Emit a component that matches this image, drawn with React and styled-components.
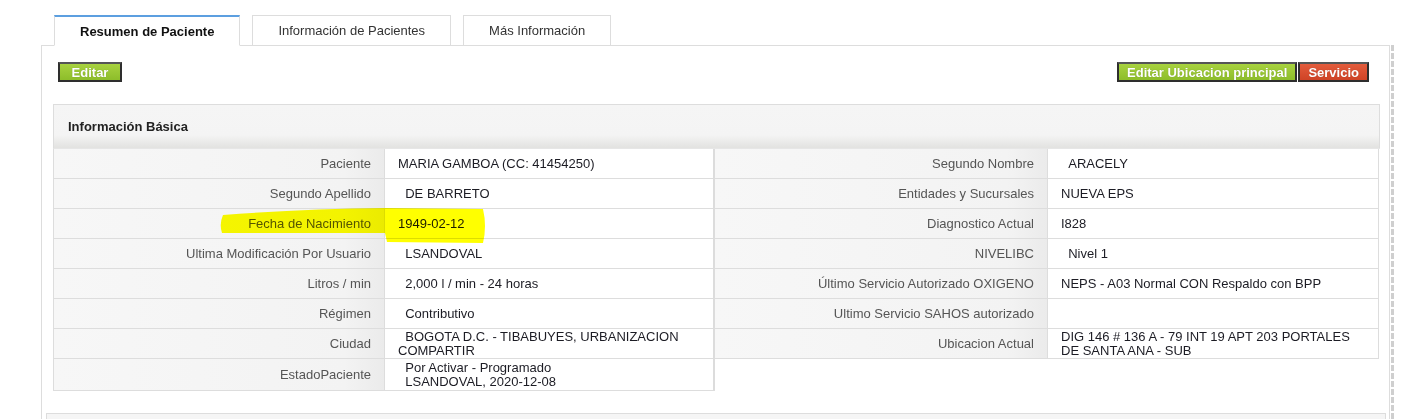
import React from 'react'
import styled, { createGlobalStyle } from 'styled-components'

const GlobalStyle = createGlobalStyle`
	html, body {
		margin: 0;
		padding: 0;
		background: #fff;
		overflow: hidden;
	}
	body {
		font-family: "Liberation Sans", Arial, sans-serif;
		font-size: 13px;
		color: #222;
	}
`

const rows = [
	['Paciente', 'MARIA GAMBOA (CC: 41454250)', 'Segundo Nombre', '  ARACELY'],
	['Segundo Apellido', '  DE BARRETO', 'Entidades y Sucursales', 'NUEVA EPS'],
	['Fecha de Nacimiento', '1949-02-12', 'Diagnostico Actual', 'I828'],
	['Ultima Modificación Por Usuario', '  LSANDOVAL', 'NIVELIBC', '  Nivel 1'],
	['Litros / min', '  2,000 l / min - 24 horas', 'Último Servicio Autorizado OXIGENO', 'NEPS - A03 Normal CON Respaldo con BPP'],
	['Régimen', '  Contributivo', 'Ultimo Servicio SAHOS autorizado', ''],
	['Ciudad', '  BOGOTA D.C. - TIBABUYES, URBANIZACION COMPARTIR', 'Ubicacion Actual', 'DIG 146 # 136 A - 79 INT 19 APT 203 PORTALES DE SANTA ANA - SUB'],
	['EstadoPaciente', '  Por Activar - Programado\n  LSANDOVAL, 2020-12-08'],
]

const Page = styled.div`
	padding: 15px 0 0 41px;
`

const TabBar = styled.div`
	display: flex;
	gap: 12px;
	padding-left: 13px;
	position: relative;
	z-index: 1;
	margin-bottom: -1px;
`

const Tab = styled.div`
	padding: 0 25px;
	display: flex;
	align-items: center;
	background: #fff;
	border: 1px solid #ddd;
	border-top: ${p => (p.$active ? '2px solid #5c9fe0' : '1px solid #ddd')};
	border-bottom: 1px solid ${p => (p.$active ? '#fff' : '#ddd')};
	height: ${p => (p.$active ? '28px' : '29px')};
	font-weight: ${p => (p.$active ? 'bold' : 'normal')};
	color: ${p => (p.$active ? '#111' : '#333')};
`

const BodyRow = styled.div`
	display: flex;
`

const Panel = styled.div`
	width: 1347px;
	height: 420px;
	border: 1px solid #ddd;
	background: #fff;
`

const DashRule = styled.div`
	width: 3px;
	margin-left: 1px;
	height: 420px;
	background: repeating-linear-gradient(to bottom, #cfcfcf 0 6px, transparent 6px 8px);
`

const Toolbar = styled.div`
	display: flex;
	justify-content: space-between;
	padding: 16px 20px 0 16px;
`

const ButtonGroup = styled.div`
	display: flex;
	gap: 1px;
`

const Button = styled.div`
	height: 16px;
	min-width: ${p => p.$wide || 'auto'};
	padding: 0 8px;
	border: 2px solid #2e2e2e;
	border-top-color: #555;
	display: flex;
	align-items: center;
	justify-content: center;
	color: #fff;
	font-weight: bold;
	font-size: 13px;
	text-shadow: 0 0 1px rgba(0, 0, 0, 0.25);
	background: ${p =>
		p.$tone === 'red'
			? 'linear-gradient(to bottom, #e35c3c, #cf4326)'
			: 'linear-gradient(to bottom, #a8d23f, #8dbd2a)'};
`

const InfoBox = styled.div`
	margin: 22px 9px 0 11px;
	position: relative;
`

const BoxHeader = styled.div`
	height: 43px;
	border: 1px solid #ddd;
	border-bottom: none;
	padding-left: 14px;
	display: flex;
	align-items: center;
	font-weight: bold;
	color: #222;
	background: linear-gradient(to bottom, #f5f5f5 0%, #f4f4f4 70%, #e2e2e0 100%);
`

const Grid = styled.div`
	display: grid;
	grid-template-columns: 331px 330px 333px 331px;
	border-left: 1px solid #ddd;
	border-top: 1px solid #e6e6e6;
`

const Cell = styled.div`
	min-height: ${p => (p.$tall ? '32px' : '30px')};
	border-bottom: 1px solid #ddd;
	border-right: ${p => (p.$divider ? '2px solid #dcdcdc' : '1px solid #ddd')};
	display: flex;
	align-items: center;
	line-height: 14px;
	white-space: pre-wrap;
	box-sizing: border-box;
`

const Label = styled(Cell)`
	justify-content: flex-end;
	text-align: right;
	padding-right: 13px;
	color: #555;
	background: linear-gradient(to right, #f7f7f7 0%, #f3f3f3 88%, #ebebeb 100%);
`

const Value = styled(Cell)`
	padding: 0 13px;
	color: #1c1c24;
	background: #fff;
`

const Marker = styled.svg`
	position: absolute;
	left: 166px;
	top: 101px;
	pointer-events: none;
	mix-blend-mode: multiply;
`

const LowerBox = styled.div`
	margin: 22px 3px 0 4px;
	height: 40px;
	border: 1px solid #ddd;
	background: #f5f5f5;
`

export default function App() {
	return (
		<Page>
			<GlobalStyle />
			<TabBar>
				<Tab $active>Resumen de Paciente</Tab>
				<Tab>Información de Pacientes</Tab>
				<Tab>Más Información</Tab>
			</TabBar>
			<BodyRow>
				<Panel>
					<Toolbar>
						<Button $wide="44px">Editar</Button>
						<ButtonGroup>
							<Button>Editar Ubicacion principal</Button>
							<Button $tone="red">Servicio</Button>
						</ButtonGroup>
					</Toolbar>
					<InfoBox>
						<BoxHeader>Información Básica</BoxHeader>
						<Grid>
							{rows.map((r, i) => {
								const tall = i === rows.length - 1
								return (
									<React.Fragment key={i}>
										<Label $tall={tall}>{r[0]}</Label>
										<Value $tall={tall} $divider>{r[1]}</Value>
										{r[2] !== undefined && <Label>{r[2]}</Label>}
										{r[3] !== undefined && <Value>{r[3]}</Value>}
									</React.Fragment>
								)
							})}
						</Grid>
						<Marker width="270" height="40" viewBox="0 0 270 40">
							<path
								d="M4,10 Q0,19 3,28 L166,28 L168,37 L264,38 Q268,21 264,4 L166,3 Q84,4 4,10 Z"
								fill="#ffff00"
							/>
						</Marker>
					</InfoBox>
					<LowerBox />
				</Panel>
				<DashRule />
			</BodyRow>
		</Page>
	)
}
